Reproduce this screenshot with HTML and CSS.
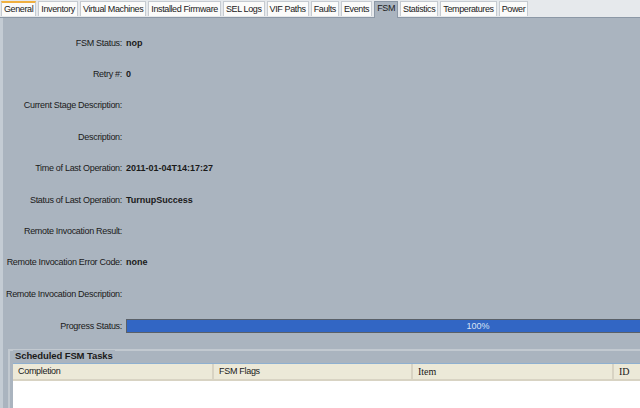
FILE: index.html
```html
<!DOCTYPE html>
<html>
<head>
<meta charset="utf-8">
<link rel="stylesheet" href="styles.css">
</head>
<body>
<div class="tabs">
  <div class="tab hover">General</div>
  <div class="tab">Inventory</div>
  <div class="tab">Virtual Machines</div>
  <div class="tab">Installed Firmware</div>
  <div class="tab">SEL Logs</div>
  <div class="tab">VIF Paths</div>
  <div class="tab">Faults</div>
  <div class="tab">Events</div>
  <div class="tab active">FSM</div>
  <div class="tab">Statistics</div>
  <div class="tab">Temperatures</div>
  <div class="tab">Power</div>
</div>
<div class="panel">
  <div class="form">
    <div class="lbl">FSM Status:</div><div class="val">nop</div>
    <div class="lbl">Retry #:</div><div class="val">0</div>
    <div class="lbl">Current Stage Description:</div><div class="val"></div>
    <div class="lbl">Description:</div><div class="val"></div>
    <div class="lbl">Time of Last Operation:</div><div class="val">2011-01-04T14:17:27</div>
    <div class="lbl">Status of Last Operation:</div><div class="val">TurnupSuccess</div>
    <div class="lbl">Remote Invocation Result:</div><div class="val"></div>
    <div class="lbl">Remote Invocation Error Code:</div><div class="val">none</div>
    <div class="lbl">Remote Invocation Description:</div><div class="val"></div>
    <div class="lbl prog-lbl">Progress Status:</div><div class="val prog-cell"><div class="progress">100%</div></div>
  </div>
  <div class="group">
    <div class="group-title">Scheduled FSM Tasks</div>
    <div class="table">
      <div class="thead">
        <div class="th c1">Completion</div>
        <div class="th c2">FSM Flags</div>
        <div class="th c3">Item</div>
        <div class="th c4">ID</div>
      </div>
      <div class="tbody"></div>
    </div>
  </div>
</div>
</body>
</html>
```
FILE: styles.css
```css
html, body {
  margin: 0;
  padding: 0;
  width: 640px;
  height: 408px;
  overflow: hidden;
  font-family: "Liberation Sans", Arial, sans-serif;
  font-size: 9px;
  letter-spacing: -0.3px;
  color: #1a1a1a;
  background: #aab4bf;
}
.tabs {
  display: flex;
  gap: 2px;
  padding: 1px 0 0 1px;
  height: 16px;
  background: #e6e9ec;
  border-bottom: 1px solid #8c98a6;
  box-sizing: content-box;
}
.tab {
  height: 14px;
  line-height: 14px;
  padding: 0 2px;
  background: #fbfbfa;
  border: 1px solid #c6cbd1;
  border-bottom: none;
  color: #202020;
  font-size: 9px;
  letter-spacing: -0.38px;
}
.tab.hover {
  border-top: 2px solid #f0b040;
  height: 13px;
  line-height: 13px;
}
.tab.active {
  background: #aab4bf;
  border-color: #8c98a6;
  height: 16px;
  line-height: 12px;
  margin-bottom: -1px;
  position: relative;
}
.panel {
  border-left: 3px solid #c4ccd4;
  height: 390px;
  box-sizing: border-box;
  overflow: hidden;
}
.form {
  display: grid;
  grid-template-columns: 119px 1fr;
  grid-auto-rows: 31.4px;
  column-gap: 4px;
  padding-top: 9px;
}
.lbl {
  text-align: right;
  align-self: center;
  white-space: nowrap;
}
.val {
  align-self: center;
  font-weight: bold;
  letter-spacing: 0;
  white-space: nowrap;
}
.prog-lbl, .prog-cell {
  margin-top: 2px;
}
.progress {
  width: 702px;
  height: 12px;
  line-height: 12px;
  background: #3266c4;
  border: 1px solid #5a6068;
  color: #d8e2f4;
  text-align: center;
  font-weight: normal;
  font-size: 9px;
}
.group {
  margin: 8px 0 0 5px;
  border-top: 2px solid #c2c9d0;
  border-left: 2px solid #c2c9d0;
  padding: 0 0 0 3px;
  height: 60px;
}
.group-title {
  font-weight: bold;
  font-size: 9.5px;
  letter-spacing: -0.1px;
  margin: -6px 0 0 0;
  background: #aab4bf;
  display: inline-block;
  padding: 0 2px;
  line-height: 12px;
}
.table {
  margin-top: 1px;
  border-top: 1px solid #8fb0d0;
  background: #fff;
  height: 60px;
}
.thead {
  display: flex;
  height: 15px;
  background: #ece9d8;
  border-bottom: 2px solid #d8d3c3;
}
.th {
  line-height: 15px;
  padding-left: 5px;
  border-right: 2px solid #d8d3c3;
  box-sizing: border-box;
}
.c1 { width: 201px; }
.c2 { width: 199px; }
.c3 { width: 201px; font-family: "Liberation Serif", serif; font-size: 10px; letter-spacing: 0; }
.c4 { flex: 1; border-right: none; font-family: "Liberation Serif", serif; font-size: 10px; letter-spacing: 0; }
```
